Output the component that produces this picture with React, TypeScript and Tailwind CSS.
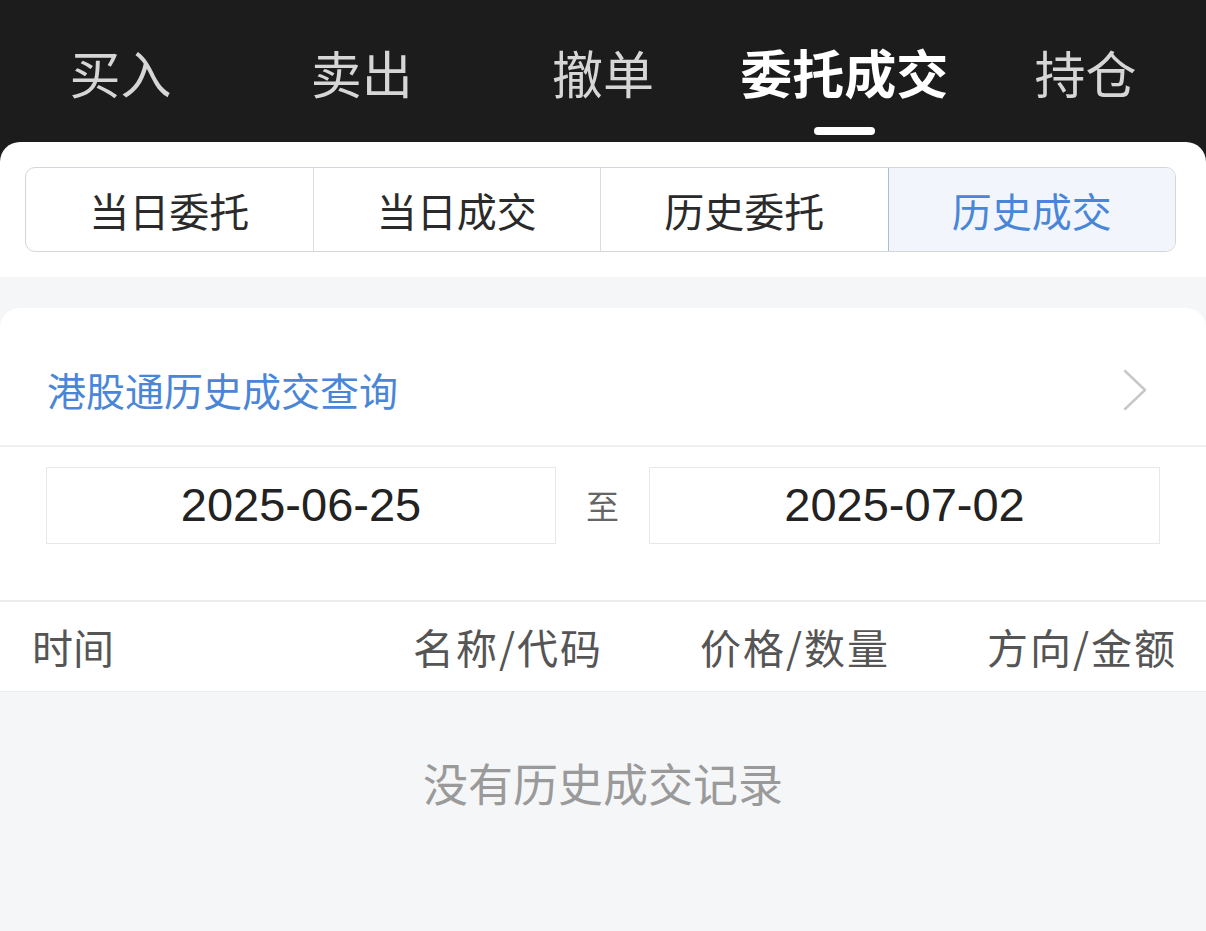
const topTabs = ['买入', '卖出', '撤单', '委托成交', '持仓'];
const subTabs = ['当日委托', '当日成交', '历史委托', '历史成交'];

function Chevron() {
  return (
    <svg width="26" height="42" viewBox="0 0 26 42" fill="none">
      <polyline points="3,2 23,21 3,40" stroke="#c8c8c8" strokeWidth="2.5" strokeLinecap="round" strokeLinejoin="round" />
    </svg>
  );
}

export default function App() {
  const font = { fontFamily: '"Noto Sans CJK SC", "Noto Sans", sans-serif' };

  return (
    <div className="w-[1206px] h-[931px] overflow-hidden bg-[#f5f6f8]" style={font}>
      {/* Top tabs */}
      <div className="bg-[#1c1c1c] h-[162px] pt-[37px]">
        <div className="grid grid-cols-5">
          {topTabs.map((t, i) => (
            <div key={t} className="flex flex-col items-center">
              <span
                className={
                  i === 3
                    ? 'text-[52px] leading-[70px] font-bold text-white'
                    : 'text-[51px] leading-[70px] text-[#d6d6d6]'
                }
              >
                {t}
              </span>
              <div className={i === 3 ? 'mt-[20px] w-[61px] h-[8px] rounded-full bg-white' : 'mt-[20px] h-[8px]'} />
            </div>
          ))}
        </div>
      </div>

      {/* Sub tabs */}
      <div className="-mt-[20px] bg-white rounded-t-[20px] pt-[25px] pb-[25px] pl-[25px] pr-[30px]">
        <div className="flex h-[85px] rounded-[10px] border border-[#d3d6db] overflow-hidden">
          {subTabs.map((t, i) => (
            <div
              key={t}
              className={
                i === 3
                  ? 'flex-1 flex items-center justify-center bg-[#f2f6fc] text-[#4a86d8] text-[40px] border-l border-[#a9bcd8]'
                  : i === 0
                  ? 'flex-1 flex items-center justify-center text-[#2a2a2a] text-[40px]'
                  : 'flex-1 flex items-center justify-center text-[#2a2a2a] text-[40px] border-l border-[#dcdcdc]'
              }
            >
              {t}
            </div>
          ))}
        </div>
      </div>

      {/* Query card */}
      <div className="mt-[31px] bg-white rounded-t-[20px]">
        <div className="h-[139px] flex items-center justify-between pl-[47px] pr-[58px] pt-[26px] border-b-2 border-[#efefef]">
          <span className="text-[39px] text-[#4a86d8]">港股通历史成交查询</span>
          <Chevron />
        </div>
        <div className="flex items-center px-[46px] pt-[20px] pb-[56px] border-b-2 border-[#ececec]">
          <div
            className="w-[510px] h-[77px] border border-[#e8e8e8] flex items-center justify-center text-[47px] text-[#222]"
            style={{ fontFamily: '"Liberation Sans", Arial, sans-serif' }}
          >
            2025-06-25
          </div>
          <div className="flex-1 text-center text-[33px] text-[#666]">至</div>
          <div
            className="w-[511px] h-[77px] border border-[#e8e8e8] flex items-center justify-center text-[47px] text-[#222]"
            style={{ fontFamily: '"Liberation Sans", Arial, sans-serif' }}
          >
            2025-07-02
          </div>
        </div>
        <div className="h-[90px] grid grid-cols-[282px_287px_287px_287px] items-center pl-[32px] text-[41px] text-[#555] border-b border-[#ececec]">
          <span>时间</span>
          <span className="text-right tracking-[2px] -mr-[2px]">名称/代码</span>
          <span className="text-right tracking-[2px] -mr-[2px]">价格/数量</span>
          <span className="text-right tracking-[2px] -mr-[2px]">方向/金额</span>
        </div>
      </div>

      <div className="pt-[57px] text-center text-[45px] text-[#9a9a9a]">没有历史成交记录</div>
    </div>
  );
}
